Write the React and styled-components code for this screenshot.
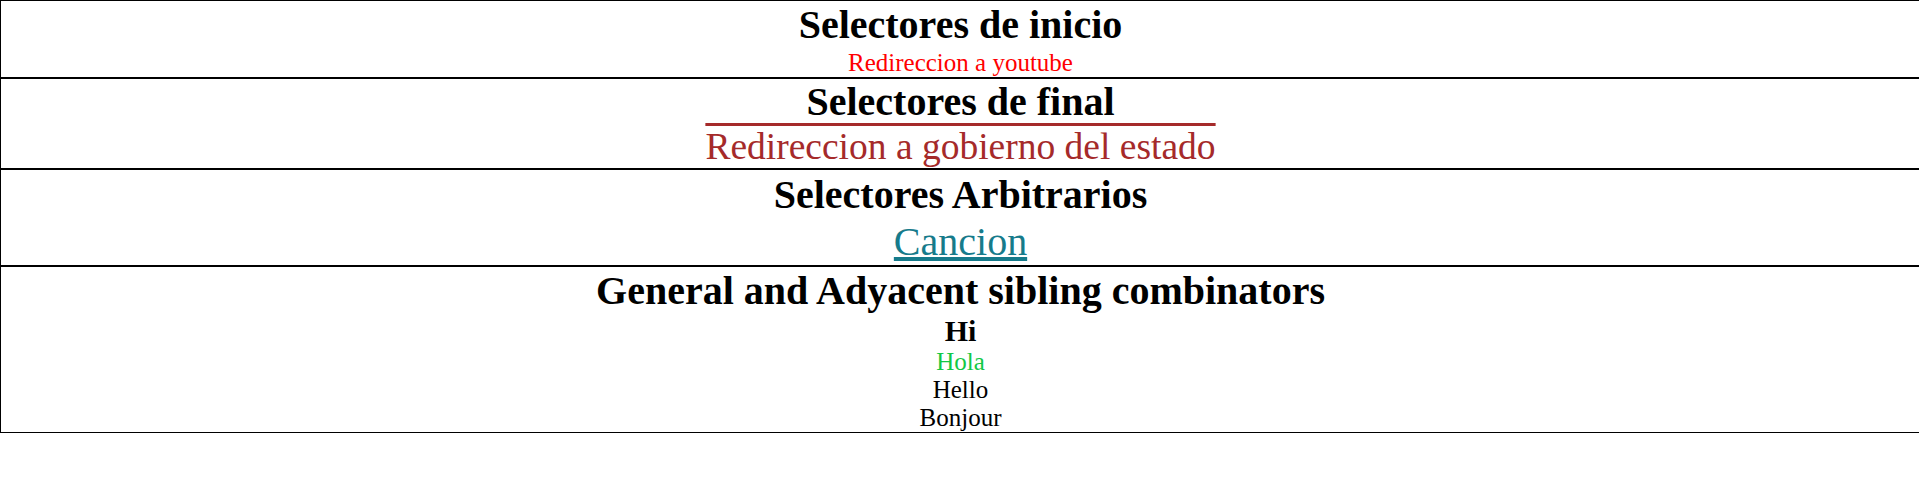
import React from "react";
import styled, { createGlobalStyle } from "styled-components";

const GlobalStyle = createGlobalStyle`
  html, body {
    margin: 0;
    padding: 0;
    background: #ffffff;
    overflow-x: hidden;
  }
  body {
    font-family: "Liberation Serif", "Times New Roman", serif;
    color: #000000;
  }
`;

const Page = styled.main`
  display: flex;
  flex-direction: column;
  width: 100vw;
`;

const Section = styled.section`
  display: flex;
  flex-direction: column;
  align-items: center;
  text-align: center;
  width: 100vw;
  border: 1px solid #000000;
  box-sizing: content-box;
  padding-top: ${(p) => p.$padTop || 0}px;
  padding-bottom: ${(p) => p.$padBottom || 0}px;
`;

const Title = styled.h1`
  margin: 0;
  font-size: 40px;
  line-height: 46px;
  font-weight: 700;
`;

const Link = styled.a`
  display: block;
  margin-top: ${(p) => p.$gap || 0}px;
  font-size: ${(p) => p.$size}px;
  line-height: ${(p) => p.$lh}px;
  color: ${(p) => p.$color};
  text-decoration: ${(p) => p.$decoration || "none"};
  text-decoration-color: ${(p) => p.$color};
  text-decoration-thickness: ${(p) => p.$thick || "auto"};
  cursor: pointer;
`;

const Greeting = styled.h2`
  margin: 0;
  font-size: 30px;
  line-height: 34px;
  font-weight: 700;
`;

const Line = styled.p`
  margin: 0;
  font-size: 25px;
  line-height: 28px;
  color: ${(p) => p.$color || "#000000"};
`;

export default function App() {
  return (
    <>
      <GlobalStyle />
      <Page>
        <Section $padTop={1}>
          <Title>Selectores de inicio</Title>
          <Link href="#youtube" $size={25} $lh={29} $color="#ff0000">
            Redireccion a youtube
          </Link>
        </Section>
        <Section>
          <Title>Selectores de final</Title>
          <Link
            href="#gobierno"
            $size={37.5}
            $lh={43}
            $color="#a52a2a"
            $decoration="overline"
            $thick="3px"
          >
            Redireccion a gobierno del estado
          </Link>
        </Section>
        <Section $padTop={2}>
          <Title>Selectores Arbitrarios</Title>
          <Link
            href="#cancion"
            $gap={1}
            $size={40}
            $lh={46}
            $color="#167b8b"
            $decoration="underline"
          >
            Cancion
          </Link>
        </Section>
        <Section $padTop={1}>
          <Title>General and Adyacent sibling combinators</Title>
          <Greeting>Hi</Greeting>
          <Line $color="#12c846">Hola</Line>
          <Line>Hello</Line>
          <Line>Bonjour</Line>
        </Section>
      </Page>
    </>
  );
}
